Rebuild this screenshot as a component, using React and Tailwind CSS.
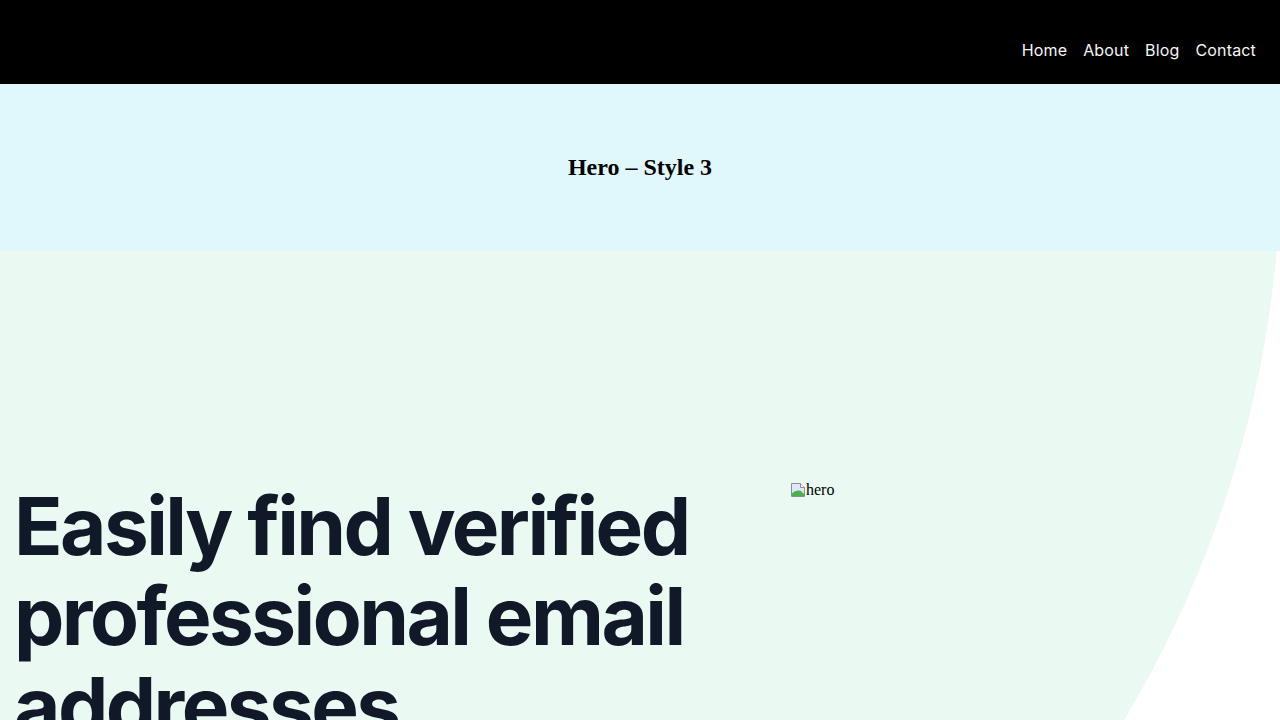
export default function App() {
  return (
    <div className="w-[1280px] h-[720px] overflow-hidden bg-white" style={{ fontFamily: "Inter, 'Liberation Sans', sans-serif" }}>
      <header className="h-[84px] bg-black flex items-end justify-end pr-6 pb-[22px]">
        <nav className="flex gap-4 text-[16px] leading-6 tracking-[0.01em] text-[#f5f5f5]">
          <a>Home</a>
          <a>About</a>
          <a>Blog</a>
          <a>Contact</a>
        </nav>
      </header>
      <section className="h-[167px] bg-[#e0f7fc] flex items-center justify-center pb-[2px]">
        <h2 className="text-2xl font-bold text-black" style={{ fontFamily: "'Liberation Serif', serif" }}>Hero – Style 3</h2>
      </section>
      <section className="relative h-[469px] overflow-hidden">
        <div className="absolute left-[-919px] top-[-1197px] w-[2200px] h-[2200px] rounded-full bg-[#eafaf3]" />
        <div className="relative flex items-start pt-[230px] pl-[14px]">
          <div className="w-[776px]">
            <h1 className="text-[80px] leading-[90px] font-bold tracking-[-0.032em] text-[#111827]">
              Easily find verified professional email addresses
            </h1>
          </div>
          <div className="flex items-start text-black text-base" style={{ fontFamily: "'Liberation Serif', serif" }}>
            <svg width="16" height="16" viewBox="0 0 16 16" className="mt-[1px]">
              <path d="M1.5 1.5h9l4 4v9h-13z" fill="#dfe8f3" stroke="#8a8f96" />
              <path d="M10.5 1.5v4h4" fill="#fff" stroke="#8a8f96" />
              <path d="M2 14V11.5c3-3 6-3.5 9-2.5l3.5 3.5V14z" fill="#4caf50" />
            </svg>
            <span className="leading-[18px]">hero</span>
          </div>
        </div>
      </section>
    </div>
  );
}
